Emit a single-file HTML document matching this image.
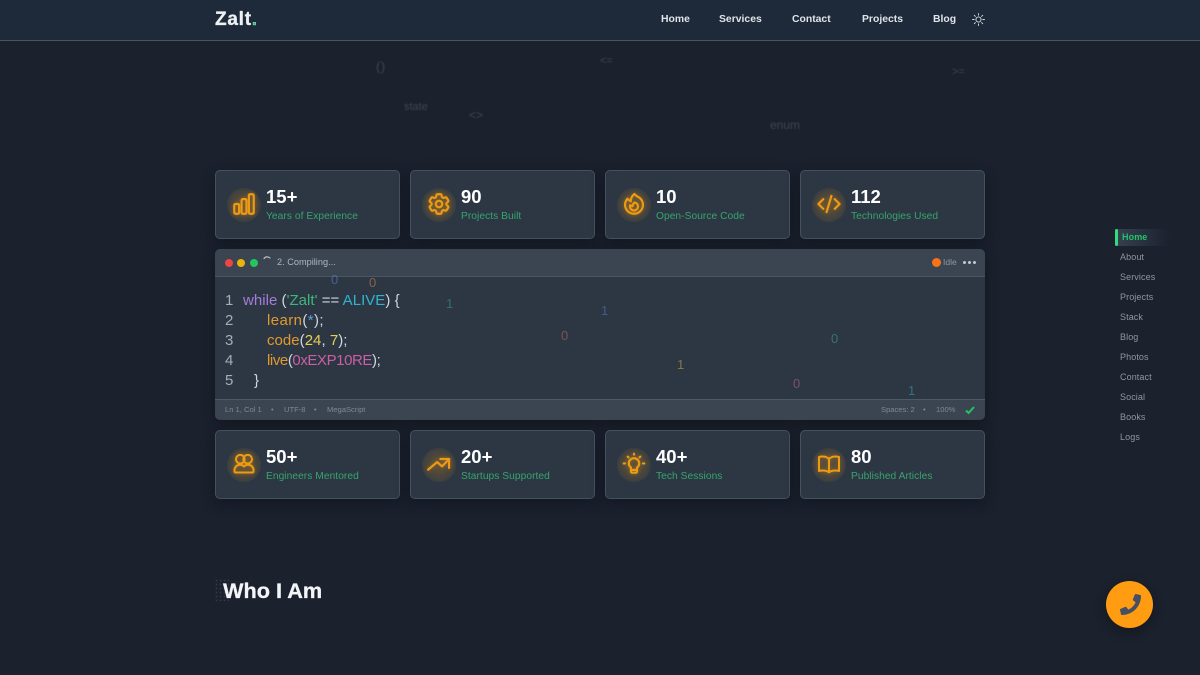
<!DOCTYPE html>
<html lang="en">
<head>
<meta charset="utf-8">
<title>Zalt</title>
<style>
html,body{margin:0;padding:0;width:1200px;height:675px;overflow:hidden;background:#1b212d;font-family:"Liberation Sans",sans-serif}
.a{position:absolute;white-space:nowrap;line-height:1}
#nav{position:absolute;left:0;top:0;width:1200px;height:40px;background:#1e2a39;border-bottom:1px solid #4a5360}
.n{top:15px;font-size:10.4px;font-weight:700;color:#dfe4ea}
.f{color:#8a929e;filter:blur(.4px);opacity:.32}
.card{position:absolute;width:183px;height:67px;background:#2d3744;border:1px solid #465160;border-radius:5px;box-shadow:0 4px 14px rgba(8,11,20,.42)}
.glow{position:absolute;left:11px;top:17px;width:34px;height:34px;border-radius:50%;background:radial-gradient(circle,rgba(245,158,11,.2) 25%,rgba(245,158,11,.11) 60%,rgba(245,158,11,0) 88%)}
.card svg{position:absolute;left:15px;top:20px;width:26px;height:26px;fill:none;stroke:#ee9a14;stroke-width:2;stroke-linecap:round;stroke-linejoin:round;filter:drop-shadow(0 0 2px rgba(245,158,11,.4))}
.num{position:absolute;left:50px;top:16px;font-size:18.5px;line-height:20px;font-weight:700;color:#fff}
.lbl{position:absolute;left:50px;top:39px;font-size:10.2px;line-height:13px;color:#35a56c;white-space:nowrap;letter-spacing:.06px}
#ed{position:absolute;left:215px;top:249px;width:770px;height:171px;background:#2d3744;border-radius:5px;overflow:hidden;box-shadow:0 4px 14px rgba(8,11,20,.45)}
#eh{position:absolute;left:0;top:0;width:770px;height:27px;background:#3b4552;border-bottom:1px solid #4d5763}
#es{position:absolute;left:0;top:150px;width:770px;height:21px;background:#3b4552;border-top:1px solid #505a66}
.dot{position:absolute;border-radius:50%;width:8px;height:8px;top:9.500px}
.s{font-size:7.600px;color:#7f8894;top:7px}
.c{font-size:15px;color:#d0d6de;letter-spacing:.03px}
.ln{font-size:15px;color:#a4adb8;left:10px}
.b{font-size:13px;opacity:.55}
.side{left:1120px;font-size:9px;color:#8f97a3;letter-spacing:.1px}
</style>
</head>
<body>
<div id="nav"></div>
<div class="a" style="left:215px;top:10px;font-size:19px;font-weight:700;color:#eef1f4;letter-spacing:.75px;-webkit-text-stroke:.3px #eef1f4">Zalt<span style="color:#22c36b">.</span></div>
<div class="a n" style="left:661px">Home</div>
<div class="a n" style="left:719px">Services</div>
<div class="a n" style="left:792px">Contact</div>
<div class="a n" style="left:862px">Projects</div>
<div class="a n" style="left:933px">Blog</div>
<svg class="a" style="left:972px;top:13px" width="13" height="13" viewBox="0 0 24 24" fill="none" stroke="#d7dce3" stroke-width="1.7" stroke-linecap="round"><circle cx="12" cy="12" r="4.8"/><path d="M12 1v3M12 20v3M1 12h3M20 12h3M4.2 4.2l2.1 2.1M17.7 17.7l2.1 2.1M4.2 19.8l2.1-2.1M17.7 6.3l2.1-2.1"/></svg>

<div class="a f" style="left:376px;top:60px;font-size:13px;letter-spacing:.6px">()</div>
<div class="a f" style="left:600px;top:56px;font-size:11px">&lt;=</div>
<div class="a f" style="left:952px;top:67px;font-size:11px">&gt;=</div>
<div class="a f" style="left:404px;top:102px;font-size:11px">state</div>
<div class="a f" style="left:469px;top:109px;font-size:12px">&lt;&gt;</div>
<div class="a f" style="left:770px;top:119px;font-size:12px">enum</div>

<div class="card" style="left:215px;top:170px"><div class="glow"></div><svg viewBox="0 0 24 24"><path d="M3 13.125C3 12.504 3.504 12 4.125 12h2.250c.621 0 1.125.504 1.125 1.125v6.750C7.500 20.496 6.996 21 6.375 21h-2.250A1.125 1.125 0 013 19.875v-6.750zM9.750 8.625c0-.621.504-1.125 1.125-1.125h2.250c.621 0 1.125.504 1.125 1.125v11.250c0 .621-.504 1.125-1.125 1.125h-2.250a1.125 1.125 0 01-1.125-1.125V8.625zM16.500 4.125c0-.621.504-1.125 1.125-1.125h2.250C20.496 3 21 3.504 21 4.125v15.750c0 .621-.504 1.125-1.125 1.125h-2.250a1.125 1.125 0 01-1.125-1.125V4.125z"/></svg><div class="num">15+</div><div class="lbl">Years of Experience</div></div>
<div class="card" style="left:410px;top:170px"><div class="glow"></div><svg viewBox="0 0 24 24"><path d="M9.594 3.94c.09-.542.56-.94 1.11-.94h2.593c.55 0 1.02.398 1.11.94l.213 1.281c.063.374.313.686.645.87.074.04.147.083.22.127.324.196.72.257 1.075.124l1.217-.456a1.125 1.125 0 011.37.49l1.296 2.247a1.125 1.125 0 01-.26 1.431l-1.003.827c-.293.24-.438.613-.431.992a6.759 6.759 0 010 .255c-.007.378.138.75.43.99l1.005.828c.424.35.534.954.26 1.43l-1.298 2.247a1.125 1.125 0 01-1.369.491l-1.217-.456c-.355-.133-.75-.072-1.076.124a6.57 6.57 0 01-.22.128c-.331.183-.581.495-.644.869l-.213 1.28c-.09.543-.56.941-1.11.941h-2.594c-.55 0-1.02-.398-1.11-.94l-.213-1.281c-.062-.374-.312-.686-.644-.87a6.52 6.52 0 01-.22-.127c-.325-.196-.72-.257-1.076-.124l-1.217.456a1.125 1.125 0 01-1.369-.49l-1.297-2.247a1.125 1.125 0 01.26-1.431l1.004-.827c.292-.24.437-.613.43-.992a6.932 6.932 0 010-.255c.007-.378-.138-.75-.43-.99l-1.004-.828a1.125 1.125 0 01-.26-1.43l1.297-2.247a1.125 1.125 0 011.37-.491l1.216.456c.356.133.751.072 1.076-.124.072-.044.146-.087.22-.128.332-.183.582-.495.644-.869l.214-1.281z"/><circle cx="12" cy="12" r="3"/></svg><div class="num">90</div><div class="lbl">Projects Built</div></div>
<div class="card" style="left:605px;top:170px"><div class="glow"></div><svg viewBox="0 0 24 24"><path d="M15.362 5.214A8.252 8.252 0 0112 21 8.250 8.250 0 016.038 7.048 8.287 8.287 0 009 9.600a8.983 8.983 0 013.361-6.867 8.210 8.210 0 003 2.480z"/><path d="M12 18a3.750 3.750 0 00.495-7.467 5.990 5.990 0 00-1.925 3.546 5.974 5.974 0 01-2.133-1A3.750 3.750 0 0012 18z"/></svg><div class="num">10</div><div class="lbl">Open-Source Code</div></div>
<div class="card" style="left:800px;top:170px"><div class="glow"></div><svg viewBox="0 0 24 24"><path d="M17.250 7.500L21.750 12l-4.500 4.500m-10.500 0L2.250 12l4.500-4.500m7.500-3l-4.500 15"/></svg><div class="num">112</div><div class="lbl">Technologies Used</div></div>

<div id="ed">
<div id="eh"></div>
<div class="dot" style="left:10px;background:#ef4444"></div>
<div class="dot" style="left:22px;background:#eab308"></div>
<div class="dot" style="left:35px;background:#22c55e"></div>
<svg class="a" style="left:47px;top:6px" width="10" height="10" viewBox="0 0 10 10" fill="none" stroke="#b8bfc8" stroke-width="1.2" stroke-linecap="round"><path d="M2 3.500A4 4 0 0 1 8 3"/></svg>
<div class="a" style="left:62px;top:9px;font-size:9.200px;color:#adb4be">2. Compiling...</div>
<div class="a" style="left:717px;top:9px;width:9px;height:9px;border-radius:50%;background:#f97316"></div>
<div class="a" style="left:728px;top:9px;font-size:8.500px;color:#8d96a2">Idle</div>
<div class="a" style="left:748px;top:12px;width:3px;height:3px;border-radius:50%;background:#c2c8d0;box-shadow:5px 0 0 #c2c8d0,10px 0 0 #c2c8d0"></div>

<div class="a b" style="left:116px;top:24px;color:#5d86c9">0</div>
<div class="a b" style="left:154px;top:27px;color:#c98a4f">0</div>
<div class="a b" style="left:231px;top:48px;color:#3aa07c">1</div>
<div class="a b" style="left:386px;top:55px;color:#5877c4">1</div>
<div class="a b" style="left:346px;top:80px;color:#b56a62">0</div>
<div class="a b" style="left:616px;top:83px;color:#3ea58c">0</div>
<div class="a b" style="left:462px;top:109px;color:#c2b13f">1</div>
<div class="a b" style="left:578px;top:128px;color:#bd62a0">0</div>
<div class="a b" style="left:693px;top:135px;color:#35a5b5">1</div>

<div class="a ln" style="top:44px">1</div>
<div class="a ln" style="top:64px">2</div>
<div class="a ln" style="top:84px">3</div>
<div class="a ln" style="top:104px">4</div>
<div class="a ln" style="top:124px">5</div>
<div class="a c" style="left:28px;top:44px"><span style="color:#a67cd6">while</span> (<span style="color:#3cb87a">'Zalt'</span> == <span style="color:#2fb4cf">ALIVE</span>) {</div>
<div class="a c" style="left:52px;top:64px;letter-spacing:.4px"><span style="color:#e19a2e">learn</span>(<span style="color:#5a9fe0">*</span>);</div>
<div class="a c" style="left:52px;top:84px"><span style="color:#e19a2e">code</span>(<span style="color:#e5cf55">24</span>, <span style="color:#e5cf55">7</span>);</div>
<div class="a c" style="left:52px;top:104px;letter-spacing:-.42px"><span style="color:#e19a2e">live</span>(<span style="color:#c95fa4">0xEXP10RE</span>);</div>
<div class="a c" style="left:39px;top:124px">}</div>

<div id="es"></div>
<div class="a s" style="left:10px;top:157px">Ln 1, Col 1</div>
<div class="a s" style="left:56px;top:157px">•</div>
<div class="a s" style="left:69px;top:157px">UTF-8</div>
<div class="a s" style="left:99px;top:157px">•</div>
<div class="a s" style="left:112px;top:157px">MegaScript</div>
<div class="a s" style="left:666px;top:157px">Spaces: 2</div>
<div class="a s" style="left:708px;top:157px">•</div>
<div class="a s" style="left:721px;top:157px">100%</div>
<svg class="a" style="left:750px;top:156px" width="10" height="10" viewBox="0 0 10 10" fill="none" stroke="#22c55e" stroke-width="2"><path d="M1 5.500l2.600 2.400L9 2"/></svg>
</div>

<div class="card" style="left:215px;top:430px"><div class="glow"></div><svg viewBox="-1 -1 26 26"><circle cx="8.300" cy="7.200" r="4.300"/><circle cx="15.700" cy="7.200" r="4.300"/><path d="M8 12.800c1.600 0 3 .6 4 1.700 1-1.100 2.400-1.700 4-1.700 3.200 0 5.500 2.400 5.500 5.400v1.300c0 .6-.4 1-1 1h-17c-.6 0-1-.4-1-1v-1.300c0-3 2.300-5.400 5.500-5.400z"/></svg><div class="num">50+</div><div class="lbl">Engineers Mentored</div></div>
<div class="card" style="left:410px;top:430px"><div class="glow"></div><svg viewBox="0 0 24 24"><path transform="translate(-.5 0)" d="M2.500 17.200L10.800 10.200L15.400 14.200L21.800 7.400"/><path transform="translate(-.5 0)" d="M13.800 7.400H21.800V15.700"/></svg><div class="num">20+</div><div class="lbl">Startups Supported</div></div>
<div class="card" style="left:605px;top:430px"><div class="glow"></div><svg viewBox="0 0 24 24"><path d="M9.200 15.300a4.800 4.800 0 1 1 5.600 0v3.700a1 1 0 0 1-1 1h-3.600a1 1 0 0 1-1-1z"/><path d="M9.500 17.500h5M12 2.500v.8M6.200 5.200l.7.700M17.800 5.200l-.7.700M2.500 11.500h1.200M20.300 11.500h1.200"/></svg><div class="num">40+</div><div class="lbl">Tech Sessions</div></div>
<div class="card" style="left:800px;top:430px"><div class="glow"></div><svg viewBox="-1 -1 26 26"><path d="M12 7C10.500 5.300 8 4.500 5.500 4.500c-1.200 0-2.400.2-3.500.5v14c1.100-.3 2.300-.5 3.500-.5 2.500 0 5 .7 6.500 1.800 1.500-1.100 4-1.800 6.500-1.800 1.200 0 2.400.2 3.500.5V5c-1.100-.3-2.300-.5-3.500-.5C16 4.500 13.500 5.300 12 7z"/><path d="M12 7v12.500"/></svg><div class="num">80</div><div class="lbl">Published Articles</div></div>

<svg class="a" style="left:215px;top:579px;opacity:.65" width="14" height="22"><defs><pattern id="p" width="4" height="4" patternUnits="userSpaceOnUse"><circle cx="1.500" cy="1.500" r="1" fill="#3c4654"/></pattern></defs><rect width="14" height="22" fill="url(#p)"/></svg>
<div class="a" style="left:223px;top:580px;font-size:21.700px;font-weight:700;color:#f3f5f8;-webkit-text-stroke:.3px #f3f5f8">Who I Am</div>

<div class="a" style="left:1115px;top:229px;width:55px;height:17px;border-radius:2px;background:linear-gradient(90deg,#364151,rgba(54,65,81,0))"></div>
<div class="a" style="left:1115px;top:229px;width:2.500px;height:17px;border-radius:2px;background:#2fdc80"></div>
<div class="a side" style="left:1122px;top:233px;color:#22c36b;font-weight:700">Home</div>
<div class="a side" style="top:253px">About</div>
<div class="a side" style="top:273px">Services</div>
<div class="a side" style="top:293px">Projects</div>
<div class="a side" style="top:313px">Stack</div>
<div class="a side" style="top:333px">Blog</div>
<div class="a side" style="top:353px">Photos</div>
<div class="a side" style="top:373px">Contact</div>
<div class="a side" style="top:393px">Social</div>
<div class="a side" style="top:413px">Books</div>
<div class="a side" style="top:433px">Logs</div>

<div class="a" style="left:1106px;top:581px;width:47px;height:47px;border-radius:50%;background:#ff9c12;box-shadow:0 4px 12px rgba(0,0,0,.3)"></div>
<svg class="a" style="left:1119.500px;top:593.500px" width="21" height="21" viewBox="0 0 512 512" fill="#465060"><path d="M493.400 24.600l-104-24c-11.300-2.600-22.900 3.300-27.500 13.900l-48 112c-4.200 9.800-1.400 21.300 6.900 28l60.600 49.600c-36 76.700-98.900 140.500-177.200 177.200l-49.600-60.600c-6.800-8.300-18.200-11.100-28-6.900l-112 48C3.900 366.500-2 378.100.6 389.400l24 104C27.100 504.200 36.700 512 48 512c256.100 0 464-207.500 464-464 0-11.200-7.700-20.900-18.600-23.400z"/></svg>
</body>
</html>
